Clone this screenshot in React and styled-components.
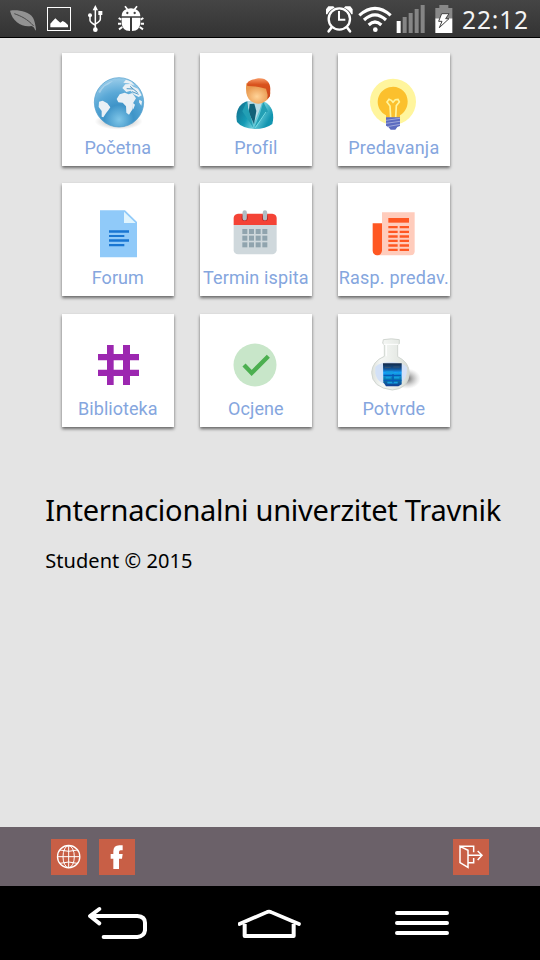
import React from "react";
import styled, { createGlobalStyle } from "styled-components";

const Global = createGlobalStyle`
  * { box-sizing: border-box; }
  body { margin: 0; background: #e4e4e4; }
  svg { display: block; flex: none; }
`;

const Screen = styled.div`
  display: flex;
  flex-direction: column;
  width: 540px;
  height: 960px;
  overflow: hidden;
  background: #e4e4e4;
  font-family: "Noto Sans", sans-serif;
`;

const StatusBar = styled.header`
  display: flex;
  justify-content: space-between;
  height: 38px;
  flex: none;
  padding: 0 9.7px 0 8px;
  background: linear-gradient(#454545, #333);
  border-bottom: 1px solid #000;
`;

const StatusGroup = styled.div`
  display: flex;
  height: 38px;
  gap: ${(p) => p.$gap}px;
`;

const Clock = styled.time`
  width: 68.3px;
  margin-left: 0.7px;
  color: #f4f4f4;
  font-size: 24.5px;
  line-height: 39px;
  letter-spacing: 0.85px;
  white-space: nowrap;
`;

const Content = styled.main`
  flex: 1;
  min-height: 0;
  padding-top: 15px;
`;

const TileGrid = styled.nav`
  display: grid;
  grid-template-columns: repeat(3, 112.5px);
  grid-auto-rows: 113px;
  gap: 17.4px 25.5px;
  padding-left: 61.6px;
`;

const Tile = styled.a`
  display: flex;
  flex-direction: column;
  align-items: center;
  background: #fff;
  box-shadow: 0 2px 3px rgba(0, 0, 0, 0.55);
`;

const TileLabel = styled.span`
  color: #85a6de;
  font-family: Roboto, sans-serif;
  font-size: 18px;
  line-height: 24px;
  letter-spacing: ${(p) => p.$tracking}px;
  margin-top: 3px;
  white-space: nowrap;
`;

const Title = styled.h1`
  margin: 62.2px 0 0 45.2px;
  color: #000;
  font-size: 29px;
  font-weight: 400;
  line-height: 42px;
  letter-spacing: -0.25px;
  white-space: nowrap;
`;

const Copyright = styled.p`
  margin: 16px 0 0 45.3px;
  color: #000;
  font-size: 20px;
  line-height: 28px;
  letter-spacing: 0.04px;
`;

const ActionBar = styled.footer`
  display: flex;
  align-items: center;
  gap: 12px;
  height: 59px;
  flex: none;
  padding: 0 51px;
  background: #6b6169;
`;

const ActionButton = styled.a`
  display: flex;
  width: 36px;
  height: 36px;
  background: #c85f46;
  margin-left: ${(p) => (p.$end ? "auto" : 0)};
`;

const SystemNav = styled.nav`
  display: flex;
  justify-content: space-between;
  height: 74px;
  flex: none;
  padding: 0 89px 0 85px;
  background: #000;
`;

const StatusIcon = ({ x, w, children }) => (
  <svg width={w / 3} height="38" viewBox={`${x} 0 ${w} 114`} fill="#fff">
    {children}
  </svg>
);

const StatusIcons = () => (
  <StatusGroup $gap={8}>
    <StatusIcon x={24} w={90}>
      <path d="M30 32C48 28 86 32 99 53Q105 64 108 88L106 92Q102 79 94 78C67 83 38 66 30 32Z" fill="#929292" />
      <path d="M43 41C63 48 82 57 101 78" fill="none" stroke="#494949" strokeWidth="3" />
    </StatusIcon>
    <StatusIcon x={138} w={78}>
      <rect x="142.5" y="22.5" width="69" height="69" fill="none" stroke="#fff" strokeWidth="3" />
      <path d="M151 82V71L159 62L166 55L174 62L181 68L188 63L195 67L204 75V82Z" />
    </StatusIcon>
    <StatusIcon x={240} w={90}>
      <g fill="none" stroke="#fff" strokeWidth="4.5">
        <path d="M286 25V90M270 49V61Q270 67 285 75M301 43V57Q301 64 286 72" />
      </g>
      <path d="M286 15L294 31H278ZM295 33H307V45H295Z" />
      <circle cx="270" cy="46" r="6" />
      <circle cx="286" cy="89" r="7" />
    </StatusIcon>
    <StatusIcon x={354} w={84}>
      <path d="M365 49Q365 33 379 28L373 20L377 17L384 26Q393 23 402 26L409 17L413 20L407 28Q421 34 421 49Z" />
      <path d="M365 53H390V93Q365 92 365 65ZM396 53H421V65Q421 92 396 93Z" />
      <path d="M356 54L364 59M354 71H364M357 88L367 81M430 54L422 59M432 71H422M429 88L419 81" stroke="#fff" strokeWidth="6" />
      <circle cx="382" cy="39" r="3.5" fill="#444" />
      <circle cx="404" cy="39" r="3.5" fill="#444" />
    </StatusIcon>
  </StatusGroup>
);

const SystemStatus = () => (
  <StatusGroup $gap={4}>
    <StatusIcon x={45} w={92}>
      <circle cx="91" cy="57" r="32" fill="none" stroke="#fff" strokeWidth="7" />
      <path d="M90 33V59H109" fill="none" stroke="#fff" strokeWidth="6" />
      <path d="M51 43V28L58 19H73L77 23Q61 29 55 43ZM131 43V28L124 19H109L105 23Q121 29 127 43Z" />
      <path d="M67 83L59 94M115 83L123 94" stroke="#fff" strokeWidth="8" strokeLinecap="round" />
    </StatusIcon>
    <StatusIcon x={149} w={101}>
      <g fill="none" stroke="#fff" strokeWidth="9.5">
        <path d="M153 46Q200 4 247 46M167 60Q200 29 233 60M181 75Q200 57 219 75" />
      </g>
      <circle cx="201" cy="89" r="7" />
    </StatusIcon>
    <StatusIcon x={262} w={88}>
      <path d="M264 63H276V99H264Z" />
      <path d="M282 51H294V99H282ZM300 39H312V99H300ZM318 27H330V99H318ZM336 15H348V99H336Z" fill="#858585" />
    </StatusIcon>
    <StatusIcon x={362} w={84}>
      <path d="M381 24H393V15H420V24H432V55H381Z" fill="#898989" />
      <path d="M381 55H432V99H381Z" />
      <path d="M400 41H422L412 56H422L393 83L401 64H391Z" fill="#fff" stroke="#444" strokeWidth="3" />
    </StatusIcon>
    <Clock>22:12</Clock>
  </StatusGroup>
);

const TileArt = ({ children }) => (
  <svg width="112" height="80" viewBox="0 0 336 240">
    {children}
  </svg>
);

const GlobeArt = () => (
  <TileArt>
    <defs>
      <radialGradient id="sea" cx="0.5" cy="0.85" r="0.85">
        <stop offset="0" stopColor="#7fc6e8" />
        <stop offset="0.35" stopColor="#3f94c8" />
        <stop offset="0.65" stopColor="#5ba9d7" />
        <stop offset="1" stopColor="#9bcdea" />
      </radialGradient>
      <radialGradient id="floor">
        <stop offset="0" stopColor="#777" stopOpacity="0.8" />
        <stop offset="1" stopColor="#999" stopOpacity="0" />
      </radialGradient>
    </defs>
    <ellipse cx="170" cy="205" rx="72" ry="25" fill="url(#floor)" />
    <circle cx="171" cy="148" r="74" fill="url(#sea)" stroke="#4a9aca" strokeWidth="2" />
    <g fill="#e9f0f5">
      <path d="M111 146L122 143L136 151L145 163L139 172L133 179L124 193L119 191V174L110 162Z" />
      <path d="M173 124L188 119L200 124L211 120L222 136L213 151L212 168L201 185L193 179L192 160L182 149L169 148L164 138Z" />
      <path d="M181 105L190 94L205 93L214 101L228 107L239 127L230 132L217 125L206 113L193 117Z" />
      <path d="M192 80L208 86L218 98L199 91L184 89ZM213 150L219 155L214 169L211 162ZM232 140L240 145L238 158L231 148Z" />
      <path d="M109 116Q127 89 154 83L140 94L128 100L120 110L114 121Z" opacity=".35" />
    </g>
    <path d="M194 107L213 108M204 100L227 119M210 116L230 124" stroke="#5199c5" strokeWidth="3" />
  </TileArt>
);

const PersonArt = () => (
  <TileArt>
    <defs>
      <linearGradient id="suit" x2="1" y2="0.4">
        <stop stopColor="#126a88" />
        <stop offset="0.45" stopColor="#159bb5" />
        <stop offset="0.7" stopColor="#69cbd9" />
        <stop offset="1" stopColor="#1295b0" />
      </linearGradient>
      <radialGradient id="face" cx="0.45" cy="0.65">
        <stop stopColor="#ffd398" />
        <stop offset="1" stopColor="#e99a50" />
      </radialGradient>
      <linearGradient id="hair" x2="0" y2="1">
        <stop stopColor="#f79a65" />
        <stop offset="0.3" stopColor="#d9531e" />
        <stop offset="1" stopColor="#ca451a" />
      </linearGradient>
    </defs>
    <path d="M111 207C104 175 119 151 142 145H188C215 153 225 182 217 213Q197 228 164 228Q125 225 111 207Z" fill="url(#suit)" />
    <path d="M142 144H188L178 173L161 212L145 176Z" fill="#b9dce5" />
    <path d="M149 153L163 152L169 174L162 214L146 178Z" fill="#116178" />
    <path d="M139 148L149 181L160 224L127 175ZM190 147L179 184L163 224L204 175Z" fill="#239fb4" />
    <path d="M166 224L198 177" stroke="#78dce5" strokeWidth="3" />
    <path d="M139 91Q169 88 202 96L211 120Q207 138 197 144Q178 160 153 145Q134 131 139 91Z" fill="url(#face)" />
    <path d="M142 99C137 83 158 80 174 76C200 74 211 90 211 107L210 130L202 139L203 126L198 107Q169 99 142 99Z" fill="url(#hair)" />
  </TileArt>
);

const BulbArt = () => (
  <TileArt>
    <circle cx="165" cy="146" r="69" fill="#fff59d" />
    <path d="M144 194V187C111 168 112 126 141 108C174 89 209 112 209 145C209 166 199 179 186 187V194Z" fill="#fbc02d" />
    <path d="M158 193L156 159L147 147L153 139L160 142L165 148L172 140L180 139L184 147L175 158L173 193" fill="none" stroke="#fff59d" strokeWidth="5" />
    <path d="M144 193H186V219L178 222L172 230H158L151 222L144 218Z" fill="#5c6bc0" />
    <path d="M144 202L186 196M144 211L186 205M148 221L186 214" stroke="#9fa8da" strokeWidth="3" />
  </TileArt>
);

const DocumentArt = () => (
  <TileArt>
    <path d="M114 82H189L225 117V223H114Z" fill="#90caf9" />
    <path d="M186 86L221 120H186Z" fill="#e1f5fe" />
    <path d="M141 142H201V149H141ZM141 156H187V162H141ZM141 169H201V176H141ZM141 183H187V190H141Z" fill="#1976d2" />
  </TileArt>
);

const CalendarArt = () => (
  <TileArt>
    <path d="M101 125H230V202Q228 213 217 214H114Q102 213 101 202Z" fill="#cfd8dc" />
    <path d="M114 92H217Q229 93 230 105V126H101V105Q102 93 114 92Z" fill="#f44336" />
    <path d="M134 102V105M195 102V105" stroke="#b71c1c" strokeWidth="18" strokeLinecap="round" />
    <path d="M134 88V106M195 88V106" stroke="#b0bec5" strokeWidth="13" strokeLinecap="round" />
    {[138, 158, 178].map((y) =>
      [127, 147, 167, 187].map((x) => (
        <rect key={`${x}-${y}`} x={x} y={y} width="15" height="15" fill="#90a4ae" />
      ))
    )}
  </TileArt>
);

const NewspaperArt = () => (
  <TileArt>
    <path d="M132 88H230V206Q229 217 216 217H114L132 203Z" fill="#ffccbc" />
    <path d="M104 121H132V202Q131 217 118 217Q105 216 104 203Z" fill="#ff5722" />
    <path d="M151 105H213V119H151Z" fill="#ff5722" />
    {[129, 143, 157, 170, 184, 197].map((y) => (
      <path key={y} d={`M151 ${y}H179V${y + 7}H151ZM185 ${y}H213V${y + 7}H185Z`} fill="#ff5722" />
    ))}
  </TileArt>
);

const HashArt = () => (
  <TileArt>
    <path d="M135 93H155V213H135ZM183 93H204V213H183ZM108 120H231V139H108ZM108 167H231V186H108Z" fill="#9c27b0" />
  </TileArt>
);

const CheckArt = () => (
  <TileArt>
    <circle cx="165" cy="153" r="64.5" fill="#c8e6c9" />
    <path d="M132 153L155 177L205 127" fill="none" stroke="#4caf50" strokeWidth="13" />
  </TileArt>
);

const FlaskArt = () => (
  <TileArt>
    <defs>
      <radialGradient id="flask-shadow">
        <stop stopColor="#555" stopOpacity="0.9" />
        <stop offset="1" stopColor="#aaa" stopOpacity="0" />
      </radialGradient>
      <linearGradient id="glass">
        <stop stopColor="#dde1dc" />
        <stop offset="0.25" stopColor="#f5f7f5" />
        <stop offset="0.75" stopColor="#e4e8e3" />
        <stop offset="1" stopColor="#d2d8d1" />
      </linearGradient>
      <linearGradient id="liquid" x2="0" y2="1">
        <stop stopColor="#142947" />
        <stop offset="0.25" stopColor="#12569b" />
        <stop offset="0.4" stopColor="#159ffc" />
        <stop offset="0.7" stopColor="#087aa8" />
        <stop offset="1" stopColor="#123b93" />
      </linearGradient>
    </defs>
    <ellipse cx="207" cy="194" rx="41" ry="31" fill="url(#flask-shadow)" />
    <path d="M136 77Q160 72 184 77V89L179 92V128Q213 144 214 177Q211 225 163 228Q101 221 101 175Q103 142 139 127V92L134 88Z" fill="url(#glass)" stroke="#d1d6d1" strokeWidth="3" />
    <path d="M112 159Q125 144 163 144Q193 145 207 160Q208 205 174 214Q119 217 112 178Z" fill="#d3e1f7" />
    <path d="M135 148H191V211L181 217H144L136 205Z" fill="url(#liquid)" />
    <path d="M141 160H158M166 159H185" stroke="#39536e" strokeWidth="3" />
    <path d="M143 175H163L170 181L184 176M143 191H158M168 191H184M148 206H179" fill="none" stroke="#159fe0" strokeWidth="5" />
    <path d="M137 184H189M137 199H190M165 180V208" stroke="#0759b9" strokeWidth="4" />
    <path d="M138 91H182M145 93V127" stroke="#fff" strokeWidth="3" />
  </TileArt>
);

const tiles = [
  ["Početna", GlobeArt, 0.1],
  ["Profil", PersonArt, 0.1],
  ["Predavanja", BulbArt, 0.2],
  ["Forum", DocumentArt, 0.1],
  ["Termin ispita", CalendarArt, 0.12],
  ["Rasp. predav.", NewspaperArt, 0.22],
  ["Biblioteka", HashArt, 0.05],
  ["Ocjene", CheckArt, 0.1],
  ["Potvrde", FlaskArt, 0.15],
];

const WebIcon = () => (
  <svg width="36" height="36" viewBox="0 0 108 108" fill="none" stroke="#fff" strokeWidth="3">
    <circle cx="53" cy="53" r="33.5" strokeWidth="4" />
    <ellipse cx="53" cy="53" rx="17" ry="33" />
    <path d="M53 20V86M20 53H86M27 33Q53 41 79 33M27 73Q53 65 79 73" />
  </svg>
);

const FacebookIcon = () => (
  <svg width="36" height="36" viewBox="0 0 108 108" fill="#fff">
    <path d="M43 90V59H35V45H43V37Q43 19 61 19H71V34H65Q60 34 60 39V45H71L69 59H60V90Z" />
  </svg>
);

const LogoutIcon = () => (
  <svg width="36" height="36" viewBox="0 0 108 108" fill="none" stroke="#fff" strokeWidth="4.5">
    <path d="M21 22L45 34V85L21 71ZM21 22H62V40M62 57V71H47M46 49H86M74 36L87 49L74 63" />
  </svg>
);

const NavIcon = ({ w, x, children }) => (
  <svg width={w / 3} height="74" viewBox={`${x} 0 ${w} 222`} fill="none" stroke="#fff" strokeWidth="12" strokeLinecap="round" strokeLinejoin="round">
    {children}
  </svg>
);

export default function App() {
  return (
    <>
      <Global />
      <Screen>
        <StatusBar>
          <StatusIcons />
          <SystemStatus />
        </StatusBar>
        <Content>
          <TileGrid>
            {tiles.map(([label, Art, tracking]) => (
              <Tile key={label}>
                <Art />
                <TileLabel $tracking={tracking}>{label}</TileLabel>
              </Tile>
            ))}
          </TileGrid>
          <Title>Internacionalni univerzitet Travnik</Title>
          <Copyright>Student © 2015</Copyright>
        </Content>
        <ActionBar>
          <ActionButton aria-label="Web"><WebIcon /></ActionButton>
          <ActionButton aria-label="Facebook"><FacebookIcon /></ActionButton>
          <ActionButton $end aria-label="Odjava"><LogoutIcon /></ActionButton>
        </ActionBar>
        <SystemNav>
          <NavIcon x={165} w={195}>
            <path d="M208 69L180 90L208 112M183 90H322Q345 92 345 110V133Q343 151 322 153H221" />
          </NavIcon>
          <NavIcon x={25} w={201}>
            <path d="M29 114L110 79Q118 75 126 79L208 114" strokeWidth="11" />
            <path d="M45 114V150H192V114" strokeLinecap="butt" />
          </NavIcon>
          <NavIcon x={489} w={174}>
            <path d="M501 81H651M501 111H651M501 141H651" />
          </NavIcon>
        </SystemNav>
      </Screen>
    </>
  );
}
